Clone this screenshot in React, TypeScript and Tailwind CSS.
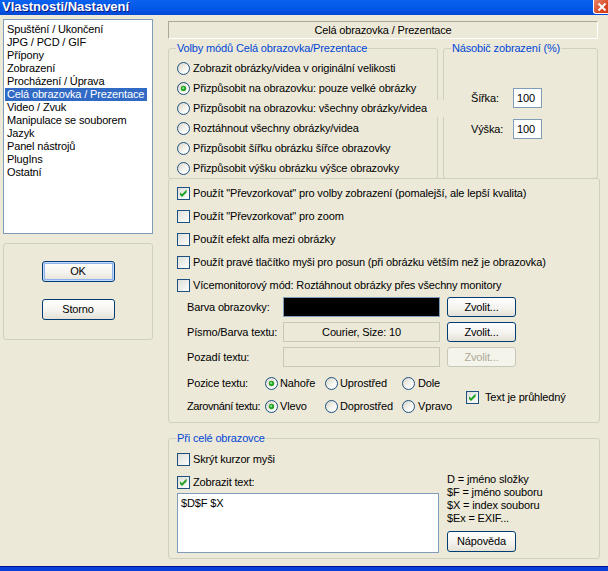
import type { ReactNode } from 'react';

const pages = [
  'Spuštění / Ukončení',
  'JPG / PCD / GIF',
  'Přípony',
  'Zobrazení',
  'Procházení / Úprava',
  'Celá obrazovka / Prezentace',
  'Video / Zvuk',
  'Manipulace se souborem',
  'Jazyk',
  'Panel nástrojů',
  'PlugIns',
  'Ostatní',
];

const modes = [
  'Zobrazit obrázky/videa v originální velikosti',
  'Přizpůsobit na obrazovku: pouze velké obrázky',
  'Přizpůsobit na obrazovku: všechny obrázky/videa',
  'Roztáhnout všechny obrázky/videa',
  'Přizpůsobit šířku obrázku šířce obrazovky',
  'Přizpůsobit výšku obrázku výšce obrazovky',
];

const options = [
  { label: 'Použít "Převzorkovat" pro volby zobrazení (pomalejší, ale lepší kvalita)', checked: true },
  { label: 'Použít "Převzorkovat" pro zoom', checked: false },
  { label: 'Použít efekt alfa mezi obrázky', checked: false },
  { label: 'Použít pravé tlačítko myši pro posun (při obrázku větším než je obrazovka)', checked: false },
  { label: 'Vícemonitorový mód: Roztáhnout obrázky přes všechny monitory', checked: false },
];

const Radio = ({ checked = false }: { checked?: boolean }) => (
  <svg width="13" height="13" viewBox="0 0 13 13" className="shrink-0">
    <defs>
      <linearGradient id="xp-radio" x1="0" y1="0" x2="1" y2="1">
        <stop offset="0" stopColor="#d6d3c2" />
        <stop offset="0.6" stopColor="#f7f7f4" />
        <stop offset="1" stopColor="#ffffff" />
      </linearGradient>
    </defs>
    <circle cx="6.5" cy="6.5" r="6" fill="url(#xp-radio)" stroke="#1c5180" />
    {checked && (
      <>
        <circle cx="6.5" cy="6.5" r="2.7" fill="#25a125" />
        <circle cx="6.2" cy="6.2" r="1.1" fill="#8fe58f" />
      </>
    )}
  </svg>
);

const Check = ({ checked = false }: { checked?: boolean }) => (
  <svg width="13" height="13" viewBox="0 0 13 13" className="shrink-0">
    <defs>
      <linearGradient id="xp-check" x1="0" y1="0" x2="1" y2="1">
        <stop offset="0" stopColor="#dcdcd7" />
        <stop offset="1" stopColor="#ffffff" />
      </linearGradient>
    </defs>
    <rect x="0.5" y="0.5" width="12" height="12" fill="url(#xp-check)" stroke="#1c5180" />
    {checked && <path d="M3 5.2 L5 7.2 L9.6 2.6 L9.6 5.4 L5 10 L3 8 Z" fill="#21a121" />}
  </svg>
);

const XpButton = ({
  children,
  className = '',
  disabled = false,
  focused = false,
}: {
  children: ReactNode;
  className?: string;
  disabled?: boolean;
  focused?: boolean;
}) => (
  <button
    type="button"
    className={`flex shrink-0 items-center justify-center rounded-[3px] border ${
      disabled
        ? 'border-[#c9c7ba] bg-[#f5f4ea] text-[#aca899]'
        : 'border-[#003c74] bg-[linear-gradient(to_bottom,#ffffff,#f4f3ee_55%,#e4e1d6)]'
    } ${focused ? 'shadow-[inset_0_0_0_1px_#c2dafc,inset_0_0_0_2px_#8cb0f0]' : ''} ${className}`}
  >
    {children}
  </button>
);

const Group = ({
  title,
  className = '',
  children,
}: {
  title?: string;
  className?: string;
  children: ReactNode;
}) => (
  <fieldset className={`min-w-0 rounded-[3px] border border-[#d0d0bf] ${className}`}>
    {title && <legend className="ml-[7px] px-px text-[#0046d5]">{title}</legend>}
    {children}
  </fieldset>
);

const RadioLabel = ({ checked, label, gap = 'gap-[2px]' }: { checked?: boolean; label: string; gap?: string }) => (
  <div className={`flex items-center ${gap}`}>
    <Radio checked={checked} />
    <span>{label}</span>
  </div>
);

export default function App() {
  return (
    <div className="relative flex h-[571px] w-[608px] flex-col overflow-hidden bg-[#ece9d8] font-['Liberation_Sans',Arial,sans-serif] text-[11px] leading-[13px] tracking-[-0.15px] text-black">
      {/* title bar, top is cut off */}
      <div className="relative h-[15px] shrink-0 bg-[linear-gradient(to_bottom,#0a62ef,#0256e6_60%,#0148d4)]">
        <div className="pl-[2px] text-[13px] leading-[13px] font-bold tracking-normal text-white [text-shadow:1px_1px_#0a1883]">
          Vlastnosti/Nastavení
        </div>
        <div className="absolute top-0 left-[593px] flex h-[14px] w-[20px] items-center rounded-bl-[3px] border-b border-l border-white bg-[linear-gradient(135deg,#e98468,#d9441f_60%,#c23a16)] pl-[3px]">
          <svg width="10" height="10" viewBox="0 0 10 10">
            <path d="M1.5 1.5 L8.5 8.5 M8.5 1.5 L1.5 8.5" stroke="#fff" strokeWidth="2" />
          </svg>
        </div>
      </div>

      <div className="flex flex-1">
        {/* left column */}
        <div className="mt-[4px] ml-[3px] w-[150px] shrink-0">
          <div className="h-[215px] border border-[#7f9db9] bg-white pt-[3px]">
            {pages.map((p) => (
              <div
                key={p}
                className={`mr-[5px] ml-px h-[13px] pl-[2px] whitespace-nowrap ${
                  p === 'Celá obrazovka / Prezentace' ? 'bg-[#316ac5] text-white' : ''
                }`}
              >
                {p}
              </div>
            ))}
          </div>
          <div className="mt-[9px] flex h-[97px] flex-col items-center gap-[17px] rounded-[3px] border border-[#d0d0bf] pt-[17px]">
            <XpButton focused className="h-[21px] w-[73px]">
              OK
            </XpButton>
            <XpButton className="h-[21px] w-[73px]">Storno</XpButton>
          </div>
        </div>

        {/* right column */}
        <div className="mt-[6px] ml-[15px] flex w-[432px] shrink-0 flex-col">
          <div className="flex h-[18px] w-[430px] items-center justify-center border border-t-[#aca899] border-r-white border-b-white border-l-[#aca899]">
            Celá obrazovka / Prezentace
          </div>

          <div className="mt-[3px] flex gap-[5px]">
            <Group title="Volby módů Celá obrazovka/Prezentace" className="h-[137px] w-[270px]">
              <div className="flex flex-col pt-[3px] pl-[8px]">
                {modes.map((m, i) => (
                  <div key={m} className="flex h-5 shrink-0 items-center gap-[3px]">
                    <Radio checked={i === 1} />
                    {i === 2 ? (
                      <span className="relative z-10 flex h-[17px] w-[255px] shrink-0 items-center bg-[#ece9d8] whitespace-nowrap">
                        {m}
                      </span>
                    ) : (
                      <span className="whitespace-nowrap">{m}</span>
                    )}
                  </div>
                ))}
              </div>
            </Group>
            <Group title="Násobič zobrazení (%)" className="h-[137px] w-[155px]">
              <div className="mt-[33px] flex flex-col gap-[11px] pl-[27px]">
                {['Šířka:', 'Výška:'].map((l) => (
                  <div key={l} className="flex items-center">
                    <span className="w-[42px]">{l}</span>
                    <div className="flex h-5 w-[29px] items-center border border-[#7f9db9] bg-white pl-[3px]">100</div>
                  </div>
                ))}
              </div>
            </Group>
          </div>

          <Group className="-mt-px h-[245px] w-[432px]">
            <div className="flex flex-col pt-[3px] pl-[8px]">
              {options.map((o) => (
                <div key={o.label} className="flex h-[23px] items-center gap-[3px] whitespace-nowrap">
                  <Check checked={o.checked} />
                  <span>{o.label}</span>
                </div>
              ))}

              <div className="flex flex-col gap-[5px]">
                <div className="flex h-5 items-center">
                  <span className="w-[106px] pl-[10px]">Barva obrazovky:</span>
                  <div className="h-5 w-[157px] border border-[#7f9db9] bg-black" />
                  <XpButton className="ml-[7px] h-5 w-[69px]">Zvolit...</XpButton>
                </div>
                <div className="flex h-5 items-center">
                  <span className="w-[106px] pl-[10px]">Písmo/Barva textu:</span>
                  <div className="flex h-5 w-[157px] items-center justify-center border border-[#c9c7ba]">
                    Courier, Size: 10
                  </div>
                  <XpButton className="ml-[7px] h-5 w-[69px]">Zvolit...</XpButton>
                </div>
                <div className="flex h-5 items-center">
                  <span className="w-[106px] pl-[10px]">Pozadí textu:</span>
                  <div className="h-5 w-[157px] border border-[#c9c7ba]" />
                  <XpButton disabled className="ml-[7px] h-5 w-[69px]">
                    Zvolit...
                  </XpButton>
                </div>
              </div>

              <div className="mt-[5px] flex items-center">
                <div className="grid grid-cols-[78px_60px_77px_64px] pl-[10px]">
                  <div className="flex h-[23px] items-center">Pozice textu:</div>
                  <div className="flex items-center">
                    <RadioLabel checked label="Nahoře" />
                  </div>
                  <div className="flex items-center">
                    <RadioLabel label="Uprostřed" />
                  </div>
                  <div className="flex items-center">
                    <RadioLabel label="Dole" gap="gap-[3px]" />
                  </div>
                  <div className="flex h-[23px] items-center tracking-[-0.4px] whitespace-nowrap">Zarovnání textu:</div>
                  <div className="flex items-center">
                    <RadioLabel checked label="Vlevo" />
                  </div>
                  <div className="flex items-center">
                    <RadioLabel label="Doprostřed" />
                  </div>
                  <div className="flex items-center">
                    <RadioLabel label="Vpravo" gap="gap-[3px]" />
                  </div>
                </div>
                <div className="mt-[5px] flex items-center gap-[6px]">
                  <Check checked />
                  <span>Text je průhledný</span>
                </div>
              </div>
            </div>
          </Group>

          <Group title="Při celé obrazovce" className="mt-[9px] h-[127px] w-[432px]">
            <div className="flex items-end pl-[8px]">
              <div className="flex w-[262px] flex-col">
                <div className="mt-[6px] flex h-[17px] items-center gap-[3px]">
                  <Check />
                  <span>Skrýt kurzor myši</span>
                </div>
                <div className="mt-[6px] flex h-[17px] items-center gap-[3px]">
                  <Check checked />
                  <span>Zobrazit text:</span>
                </div>
                <div className="mt-[2px] h-[60px] border border-[#7f9db9] bg-white pt-[3px] pl-[3px]">$D$F $X</div>
              </div>
              <div className="mb-px ml-[8px] flex flex-col">
                <div>D = jméno složky</div>
                <div>$F = jméno souboru</div>
                <div>$X = index souboru</div>
                <div>$Ex = EXIF...</div>
                <XpButton className="mt-[6px] h-[21px] w-[69px]">Nápověda</XpButton>
              </div>
            </div>
          </Group>
        </div>
      </div>

      {/* bottom window frame */}
      <div className="h-[5px] shrink-0 border-t border-[#00138c] bg-[#0a3fd9]" />
    </div>
  );
}
